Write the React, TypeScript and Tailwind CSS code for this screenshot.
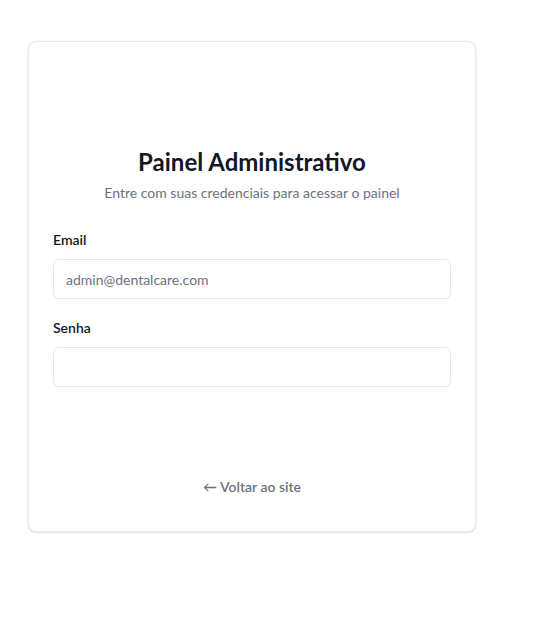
import React from "react";

export default function App() {
  return (
    <div className="min-h-[627px] w-[560px] bg-white" style={{ fontFamily: 'Lato, "Noto Sans", sans-serif' }}>
      <div className="pt-[41px] pl-[28px]">
        <div className="w-[448px] rounded-lg border border-gray-200 bg-white shadow-sm px-6 pt-[104px] pb-[34px]">
          <div className="text-center">
            <h1 className="text-2xl leading-8 font-bold text-gray-900">Painel Administrativo</h1>
            <p className="mt-[5px] text-sm leading-5 text-gray-500">Entre com suas credenciais para acessar o painel</p>
          </div>
          <div className="mt-[27px]">
            <label className="block text-sm leading-5 font-semibold text-gray-900">Email</label>
            <input
              type="email"
              placeholder="admin@dentalcare.com"
              className="mt-[9px] block h-10 w-full rounded-md border border-gray-200 px-3 text-sm text-gray-900 placeholder:text-gray-500 outline-none"
            />
          </div>
          <div className="mt-[19px]">
            <label className="block text-sm leading-5 font-semibold text-gray-900">Senha</label>
            <input
              type="password"
              className="mt-[9px] block h-10 w-full rounded-md border border-gray-200 px-3 text-sm text-gray-900 outline-none"
            />
          </div>
          <div className="mt-[90px] text-center text-sm leading-5">
            <a href="#" className="font-semibold text-gray-500">← Voltar ao site</a>
          </div>
        </div>
      </div>
    </div>
  );
}
